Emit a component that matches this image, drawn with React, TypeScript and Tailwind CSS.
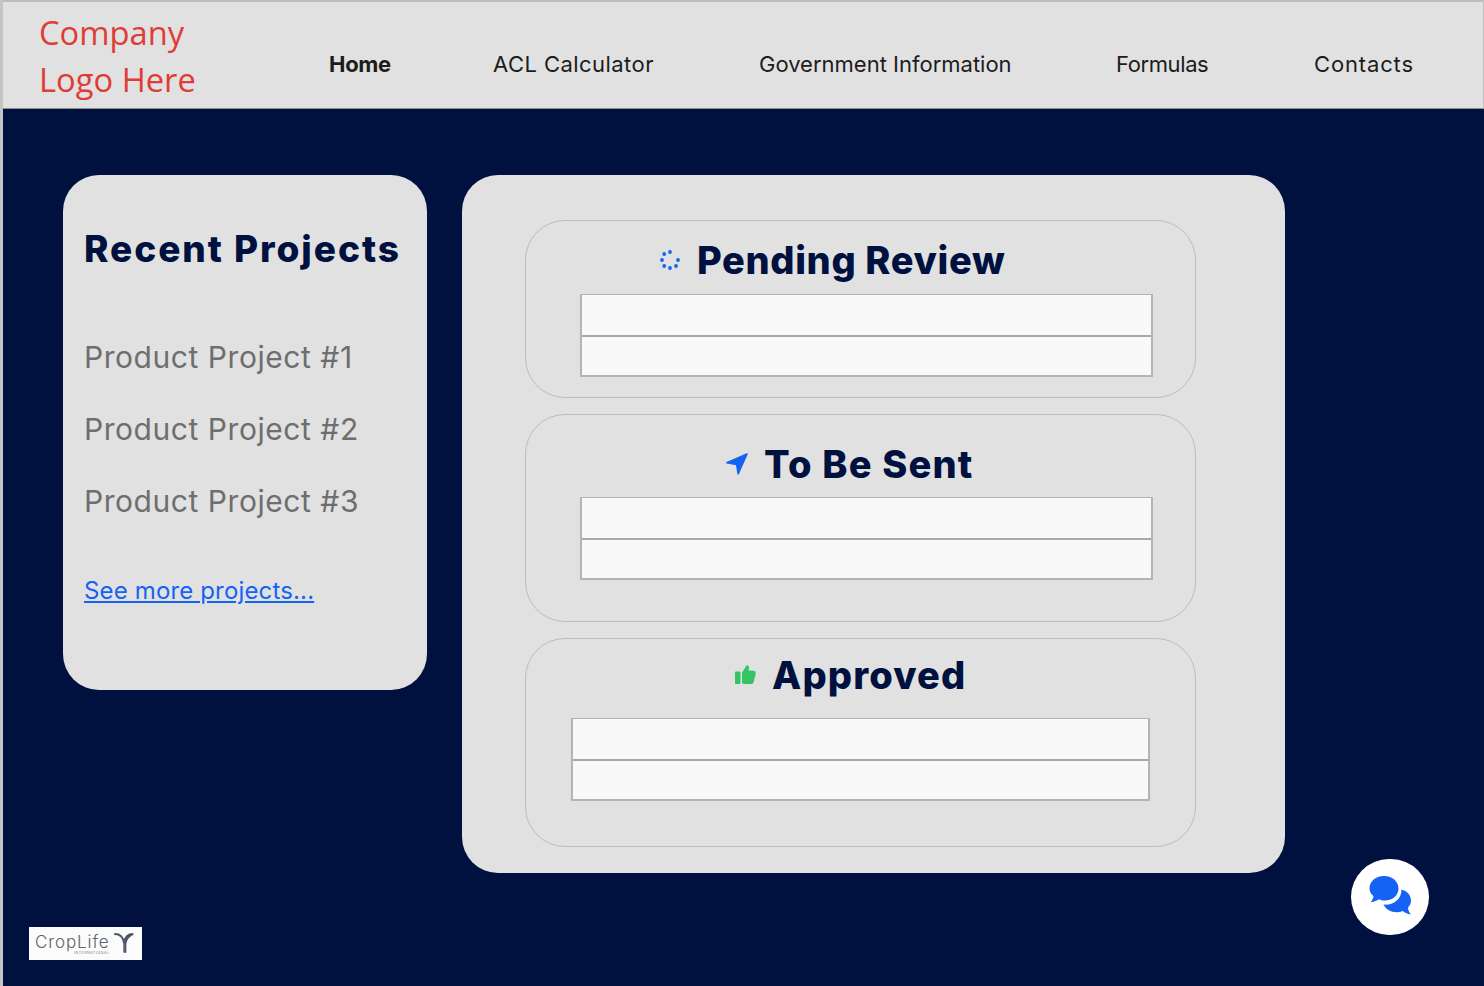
import React from "react";

function Rows({ className }: { className: string }) {
  return (
    <div className={`flex flex-col border-2 border-t border-[#b3b3b8] bg-[#f9f9f9] ${className}`}>
      <div className="h-[42px] border-b-2 border-[#a9a9a9]" />
      <div className="h-[38px]" />
    </div>
  );
}

function Spinner() {
  return (
    <svg viewBox="0 0 20 20" className="w-[20px] h-[20px] shrink-0" fill="#1463f5">
      <circle cx="10" cy="2" r="1.9" />
      <circle cx="4.2" cy="4" r="1.9" />
      <circle cx="2" cy="10" r="1.9" />
      <circle cx="4.2" cy="16" r="1.9" />
      <circle cx="10" cy="18" r="1.9" />
      <circle cx="16" cy="16" r="1.9" />
      <circle cx="18" cy="10" r="1.9" />
    </svg>
  );
}

function Send() {
  return (
    <svg viewBox="0 0 22 22" className="w-[22px] h-[22px] shrink-0" fill="#1463f5">
      <path d="M0.8 9.8 L21 0.9 L12.2 20.8 L10.6 11.4 Z" strokeLinejoin="round" stroke="#1463f5" strokeWidth="1.6" />
    </svg>
  );
}

function Thumb() {
  return (
    <svg viewBox="0 0 21 20" className="w-[21px] h-[20px] shrink-0" fill="#34c463">
      <rect x="0" y="6.5" width="5.5" height="12.5" rx="1" />
      <path d="M7 7.5 L10 3 Q10.5 0.2 12.5 0.2 Q14.8 0.8 13.6 5.5 L19 5.8 Q21.2 6.4 20.6 9 L18.8 16.8 Q18.2 19 16 19 L9 19 Q7 19 7 17.2 Z" />
    </svg>
  );
}

function Chat() {
  return (
    <svg viewBox="0 0 44 44" className="w-[44px] h-[44px]" fill="#1463f5">
      <path d="M16 1 C25 1 30.5 7 30.5 13.5 C30.5 20 25 25.5 17 25.5 C14.5 25.5 12.5 25 11 24.2 C8.5 25.8 5 27.2 2.5 27.2 C4 25.8 5.5 23 5.5 21 C3 19 1.5 16.5 1.5 13.5 C1.5 7 7 1 16 1 Z" />
      <path d="M33.5 14.5 C39 16 43 20 43 25.5 C43 28.5 41.8 30.8 40 32.5 C40 35 41.2 37 42.8 39.5 C39.5 39 36.8 37.8 34.8 36 C33 36.8 31 37.2 29 37.2 C22.5 37.2 17.5 34 15.5 29.5 C24 30.5 33.5 25.5 33.5 14.5 Z" />
    </svg>
  );
}

function Logo() {
  return (
    <div className="absolute left-[29px] top-[927px] w-[113px] h-[33px] bg-[#fbfbfb] flex items-start pl-[6px] pt-[5px]">
      <div className="flex flex-col items-end">
        <span className="text-[17px] leading-[20px] text-[#5a6472] font-light tracking-[0.9px]">CropLife</span>
        <span className="text-[3.5px] leading-[3px] text-[#777] tracking-[0.6px]">INTERNATIONAL</span>
      </div>
      <svg viewBox="0 0 22 24" className="w-[20px] h-[22px] ml-[4px]" fill="none" stroke="#4d5766" strokeLinecap="round">
        <path d="M1 2 C6 2 10 5 11 12 C12 5 16 2 21 2 C17 4 13 7 12.5 13 L12.5 22" strokeWidth="2.2" />
        <path d="M11 12 L11 22" strokeWidth="1.6" />
      </svg>
    </div>
  );
}

export default function App() {
  return (
    <div className="relative w-[1484px] h-[986px] overflow-hidden bg-[#00103f] font-['Inter',sans-serif]">
      <header className="h-[109px] bg-[#e1e1e1] border-t-2 border-l-[3px] border-b border-r border-[#bdbdbd] border-b-[#8f8f8f] flex items-center">
        <div className="w-[326px] pl-[36px] pt-[2px] text-[32.7px] leading-[47px] text-[#e03c36] font-['Open_Sans',sans-serif]">
          <div>Company</div>
          <div>Logo Here</div>
        </div>
        <nav className="flex items-center text-[#1c1c1c] text-[22px] mt-[18px]">
          <span className="w-[164px] font-bold tracking-[-0.3px]">Home</span>
          <span className="w-[266px] tracking-[0.45px]">ACL Calculator</span>
          <span className="w-[357px]">Government Information</span>
          <span className="w-[198px] tracking-[-0.4px]">Formulas</span>
          <span className="tracking-[0.85px]">Contacts</span>
        </nav>
      </header>

      <main className="flex items-start gap-[35px] pl-[63px] pt-[66px]">
        <aside className="w-[364px] h-[515px] rounded-[36px] bg-[#e1e1e1] pl-[21px] pt-[51px]">
          <h2 className="text-[37px] leading-[46px] font-extrabold text-[#00103f] whitespace-nowrap tracking-[1.95px]">Recent Projects</h2>
          <ul className="mt-[65px] flex flex-col gap-[32px] text-[30px] leading-[40px] text-[#6e6e6e] tracking-[0.55px]">
            <li>Product Project #1</li>
            <li>Product Project #2</li>
            <li>Product Project #3</li>
          </ul>
          <a className="block mt-[54px] text-[24px] leading-[32px] text-[#1463f5] underline tracking-[0.15px]">See more projects...</a>
        </aside>

        <section className="w-[823px] h-[698px] rounded-[36px] bg-[#e1e1e1] pl-[63px] pt-[45px] flex flex-col gap-[16px]">
          <div className="w-[671px] h-[178px] rounded-[40px] border border-[#bcbcbc] pt-[14px] pl-[54px]">
            <div className="flex items-center gap-[17px] h-[50px] pl-[80px]">
              <Spinner />
              <h3 className="text-[38px] font-extrabold leading-[50px] text-[#00103f] tracking-[0.65px]">Pending Review</h3>
            </div>
            <Rows className="w-[573px] mt-[9px]" />
          </div>
          <div className="w-[671px] h-[208px] rounded-[40px] border border-[#bcbcbc] pt-[24px] pl-[54px]">
            <div className="flex items-center gap-[16px] h-[50px] pl-[146px]">
              <Send />
              <h3 className="text-[38px] font-extrabold leading-[50px] text-[#00103f] tracking-[1.2px]">To Be Sent</h3>
            </div>
            <Rows className="w-[573px] mt-[8px]" />
          </div>
          <div className="w-[671px] h-[209px] rounded-[40px] border border-[#bcbcbc] pt-[11px] pl-[45px]">
            <div className="flex items-center gap-[16px] h-[50px] pl-[164px]">
              <Thumb />
              <h3 className="text-[38px] font-extrabold leading-[50px] text-[#00103f] tracking-[1.15px]">Approved</h3>
            </div>
            <Rows className="w-[579px] mt-[18px]" />
          </div>
        </section>
      </main>

      <div className="absolute left-[1351px] top-[859px] w-[78px] h-[76px] rounded-full bg-white flex items-center justify-center">
        <Chat />
      </div>
      <Logo />
      <div className="absolute left-0 top-0 w-[3px] h-full bg-[#c4c4c4]" />
    </div>
  );
}
